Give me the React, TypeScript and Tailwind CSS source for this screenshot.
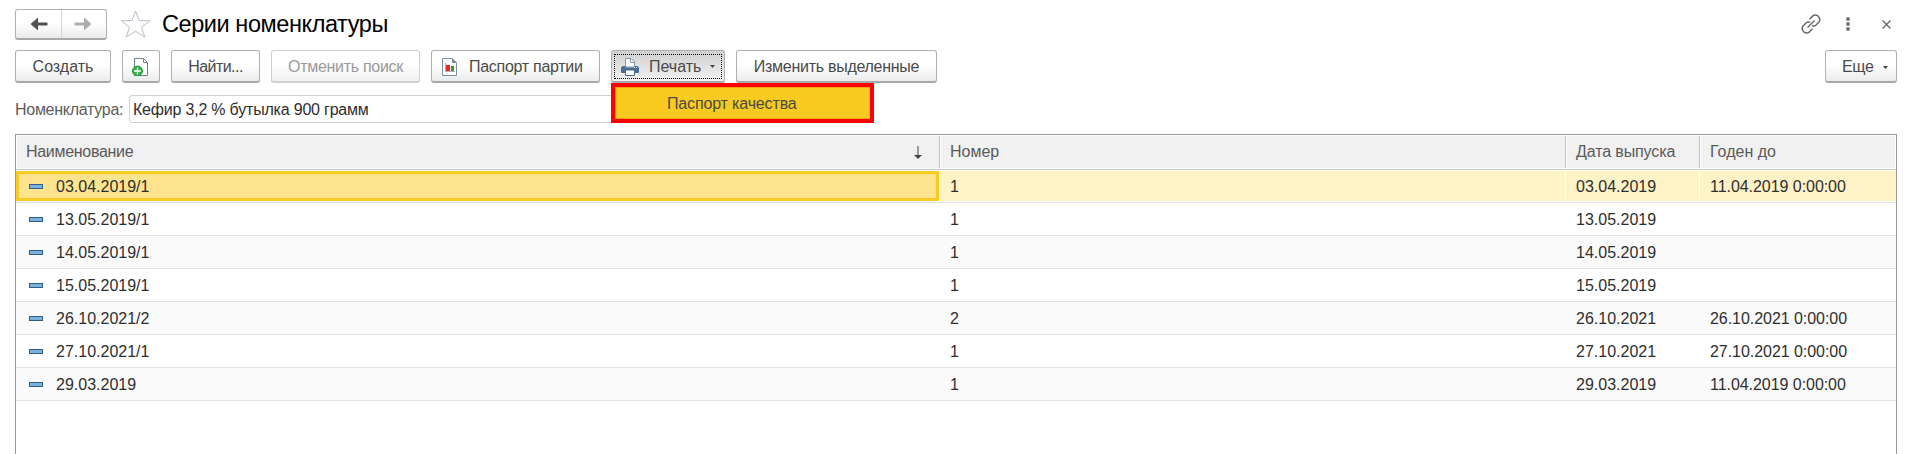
import React from 'react';

const rows = [
  { name: '03.04.2019/1', num: '1', made: '03.04.2019', best: '11.04.2019 0:00:00' },
  { name: '13.05.2019/1', num: '1', made: '13.05.2019', best: '' },
  { name: '14.05.2019/1', num: '1', made: '14.05.2019', best: '' },
  { name: '15.05.2019/1', num: '1', made: '15.05.2019', best: '' },
  { name: '26.10.2021/2', num: '2', made: '26.10.2021', best: '26.10.2021 0:00:00' },
  { name: '27.10.2021/1', num: '1', made: '27.10.2021', best: '27.10.2021 0:00:00' },
  { name: '29.03.2019', num: '1', made: '29.03.2019', best: '11.04.2019 0:00:00' },
];

const columns = [
  { title: 'Наименование', tracking: 'tracking-[-0.3px]' },
  { title: 'Номер', tracking: '' },
  { title: 'Дата выпуска', tracking: 'tracking-[-0.12px]' },
  { title: 'Годен до', tracking: '' },
];

const frame = 'h-[33px] shrink-0 rounded-[3px] border border-[#b0b0b0] border-b-2 border-b-[#a8a8a8] flex items-center whitespace-nowrap';
const face = 'bg-linear-to-b from-white from-45% to-[#ebebeb] text-[#4a4a4a]';

function Button({ className = '', children }: { className?: string; children: React.ReactNode }) {
  return <button className={`${frame} ${face} ${className}`}>{children}</button>;
}

function NavArrow({ color, flip = false }: { color: string; flip?: boolean }) {
  return (
    <svg width="18" height="14" viewBox="0 0 18 14" className={flip ? 'rotate-180' : ''}>
      <path d="M0.5 7 L8 0.5 V5.5 H17.5 V8.5 H8 V13.5 Z" fill={color} />
    </svg>
  );
}

function NewDocIcon() {
  return (
    <svg width="17" height="20" viewBox="0 0 17 20" fill="none">
      <path d="M2.5 2.5 H11.5 L15.5 6.5 V19.5 H2.5 Z" fill="#fff" stroke="#6e8196" />
      <path d="M11.5 3 V6.500 H15.5" stroke="#6e8196" />
      <circle cx="5.5" cy="15" r="5" fill="#35b04a" stroke="#22943a" />
      <path d="M5.5 11.5 V18.5 M2 15 H9" stroke="#fff" strokeWidth="1.3" />
    </svg>
  );
}

function ReportIcon() {
  return (
    <svg width="15" height="18" viewBox="0 0 15 18" className="mt-[2px]" fill="none">
      <path d="M0.5 0.5 H10 L14.5 5 V17.5 H0.5 Z" fill="#fff" stroke="#7c8f9e" />
      <path d="M10 0 L15 5 H10 Z" fill="#7c8f9e" />
      <path d="M3.5 5 V13.5 H13" stroke="#a9b0b6" />
      <rect x="4" y="7" width="4" height="6" fill="#ee2a1c" />
      <rect x="9" y="8" width="3" height="5" fill="#3a9a2c" />
    </svg>
  );
}

function PrinterIcon() {
  return (
    <svg width="18" height="18" viewBox="0 0 18 18" fill="none">
      <path d="M4.500 9 V0.500 H10 L13.500 4 V9 Z" fill="#fff" stroke="#8096aa" />
      <path d="M9.500 1 V4.500 H13" stroke="#8096aa" />
      <path d="M1.500 8 H4.500 V9.500 H13.500 V8 H16.500 L18 9.500 V14 Q18 15 17 15 H1 Q0 15 0 14 V9.500 Z" fill="#4a6c92" />
      <path d="M4.500 12 H13.500 V17.500 H4.500 Z" fill="#fff" stroke="#4a6c92" />
      <path d="M13 9.500 H14 M15 9.500 H16" stroke="#dfe8f0" />
    </svg>
  );
}

function Caret() {
  return (
    <svg width="5" height="3" viewBox="0 0 5 3">
      <path d="M0 0 H5 L2.5 3 Z" fill="#444" />
    </svg>
  );
}

function TitleBar() {
  return (
    <header className="flex h-[30px] items-center">
      <div className="flex h-[31px] w-[92px] shrink-0 rounded-[3px] border border-b-2 border-[#b0b0b0] border-b-[#a8a8a8] bg-linear-to-b from-white from-45% to-[#ebebeb]">
        <span className="flex w-[46px] items-center justify-center border-r border-[#d4d4d4]">
          <NavArrow color="#505050" />
        </span>
        <span className="flex flex-1 items-center justify-center pr-[3px]">
          <NavArrow color="#adadad" flip />
        </span>
      </div>
      <svg width="30" height="28" viewBox="0 0 30 28" className="ml-[14px] shrink-0" fill="none">
        <path d="M14.500 1 L18.200 10.500 L28.800 10.800 L20.500 17.300 L23.800 27 L14.500 21.200 L5.200 27 L8.500 17.300 L0.500 10.800 L11 10.500 Z" stroke="#b4bcc6" />
      </svg>
      <h1 className="ml-[11px] text-[23.5px] leading-[30px] tracking-[-0.42px] text-black">Серии номенклатуры</h1>
      <div className="mr-[6px] ml-auto flex items-center">
        <svg width="20" height="20" viewBox="0 0 20 20" fill="none" stroke="#6a6a6a" strokeWidth="1.5" strokeLinecap="butt">
          <path d="M8.500 5.200 L11.800 1.900 Q14.500 0 17.200 2.200 Q20 5 18 8 L15 11 Q13 12.800 11 11.500" />
          <path d="M11.500 14.800 L8.200 18.100 Q5.500 20 2.800 17.800 Q0 15 2 12 L5 9 Q7 7.200 9 8.500" />
          <path d="M6.500 13.500 L13.500 6.500" />
        </svg>
        <svg width="4" height="14" viewBox="0 0 4 14" className="mr-px ml-[25px]" fill="#707070">
          <circle cx="2" cy="2" r="1.9" /><circle cx="2" cy="7" r="1.9" /><circle cx="2" cy="12" r="1.9" />
        </svg>
        <svg width="9" height="9" viewBox="0 0 9 9" className="ml-[31px]" stroke="#707070" strokeWidth="1.5">
          <path d="M0.5 0.5 L8.5 8.5 M8.5 0.5 L0.5 8.5" />
        </svg>
      </div>
    </header>
  );
}

function Toolbar() {
  return (
    <div className="mt-[11px] flex gap-[11px]">
      <Button className="w-[96px] justify-center pt-[2px]">Создать</Button>
      <Button className="w-[38px] pl-[9px]"><NewDocIcon /></Button>
      <Button className="w-[89px] justify-center pt-[2px] tracking-[-0.55px]">Найти...</Button>
      <button className="flex h-[33px] w-[149px] items-center justify-center rounded-[3px] border border-b-2 border-[#cfcfcf] bg-linear-to-b from-white from-45% to-[#f0f0f0] pt-[2px] tracking-[-0.3px] whitespace-nowrap text-[#999]">
        Отменить поиск
      </button>
      <Button className="w-[169px] pl-[10px]">
        <ReportIcon />
        <span className="ml-[12px] pt-[2px] tracking-[-0.28px]">Паспорт партии</span>
      </Button>
      <div className="relative">
        <button className={`${frame} w-[114px] bg-linear-to-b from-[#cfcfcf] to-[#f2f2f2] px-[2px] pt-px text-[#4a4a4a]`}>
          <span className="flex h-[25px] w-full items-center border border-dotted border-black pl-[6px]">
            <PrinterIcon />
            <span className="ml-[10px]">Печать</span>
            <span className="ml-[9px] flex"><Caret /></span>
          </span>
        </button>
        <div className="absolute top-[33px] left-0 z-10 flex h-[40px] w-[263px] items-center border-[4px] border-[#ff0000] bg-[#f9cb20] pt-px pl-[52px] tracking-[-0.15px] text-[#4a4a4a] shadow-[inset_0_0_0_1px_#f9a010]">
          Паспорт качества
        </div>
      </div>
      <Button className="w-[201px] justify-center pt-[2px] tracking-[-0.28px]">Изменить выделенные</Button>
      <Button className="ml-auto w-[72px] pt-[2px] pl-[16px]">
        <span className="tracking-[-0.3px]">Еще</span>
        <span className="ml-[9px] flex"><Caret /></span>
      </Button>
    </div>
  );
}

function Cells({ className, children }: { className: string; children: React.ReactNode }) {
  return <div className={`grid grid-cols-[924px_626px_134px_1fr] ${className}`}>{children}</div>;
}

export default function App() {
  return (
    <main className="flex h-[454px] w-[1919px] flex-col overflow-hidden bg-white pt-[9px] pr-[22px] pl-[15px] font-['Liberation_Sans',Arial,sans-serif] text-[16px] leading-[20px] text-[#2e2e2e]">
      <TitleBar />
      <Toolbar />
      <div className="mt-[12px] flex h-[28px] items-center">
        <span className="w-[114px] pt-[2px] tracking-[-0.28px] text-[#5c5c5c]">Номенклатура:</span>
        <span className="flex h-[28px] w-[600px] items-center rounded-[3px] border border-[#d0d0d0] pt-[2px] pl-[3px] tracking-[-0.2px]">Кефир 3,2 % бутылка 900 грамм</span>
      </div>
      <section className="mt-[11px] flex-1 border border-b-0 border-[#999]">
        <Cells className="h-[35px] border-b border-[#c4c4c4] text-[#5a5a5a]">
          {columns.map(({ title, tracking }, i) => (
            <div
              key={title}
              className={`flex items-center border border-white bg-[#f1f1f1] pl-[9px] ${i < 3 ? 'border-r-0 shadow-[inset_-1px_0_0_0_#c4c4c4]' : ''}`}
            >
              <span className={tracking}>{title}</span>
              {i === 0 && (
                <svg width="8" height="13" viewBox="0 0 8 13" className="mr-[18px] ml-auto">
                  <path d="M3.5 0 H4.5 V9 H8 L4 13 L0 9 H3.5 Z" fill="#444" />
                </svg>
              )}
            </div>
          ))}
        </Cells>
        <div className="pt-px">
          {rows.map((row, i) => {
            const active = i === 0;
            return (
              <Cells key={row.name} className={`border-b border-[#e2e2e2] ${active ? 'h-[32px] pb-px' : 'h-[33px]'} ${active || i % 2 === 1 ? 'bg-white' : 'bg-[#fafafa]'}`}>
                <div className={`flex items-center ${active ? 'mr-px border-[3px] border-[#f9cb20] bg-[#ffe48f] pl-[10px]' : 'pl-[13px]'}`}>
                  <span className="mr-[13px] h-[5px] w-[14px] border border-[#2f5f86] bg-[#7cb2da]" />
                  <span className="pt-[2px]">{row.name}</span>
                </div>
                <div className={`flex items-center pt-[2px] pl-[10px] ${active ? 'mr-px bg-[#fef2c7]' : ''}`}>{row.num}</div>
                <div className={`flex items-center pt-[2px] pl-[10px] ${active ? 'mr-px bg-[#fef2c7]' : ''}`}>{row.made}</div>
                <div className={`flex items-center pt-[2px] pl-[10px] tracking-[-0.05px] ${active ? 'bg-[#fef2c7]' : ''}`}>{row.best}</div>
              </Cells>
            );
          })}
        </div>
      </section>
    </main>
  );
}
